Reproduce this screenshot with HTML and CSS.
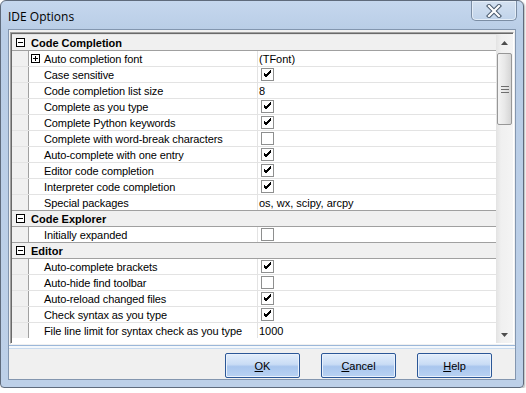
FILE: index.html
```html
<!DOCTYPE html>
<html lang="en">
  <head>
    <meta charset="UTF-8" />
    <title>IDE Options</title>
    <link rel="stylesheet" href="styles.css">
  </head>
  <body>
    <div class="window">
      <div class="titlebar">
        <span class="title">IDE Options</span>
        <button class="close-button">
          <svg width="16" height="14" viewBox="0 0 16 14">
            <path d="M3 2 L13 12 M13 2 L3 12" stroke="#4a5a6e" stroke-width="4.2" stroke-linecap="square" />
            <path d="M3 2 L13 12 M13 2 L3 12" stroke="#fff" stroke-width="2.2" stroke-linecap="square" />
          </svg>
        </button>
      </div>

      <div class="client">
        <div class="inspector">
          <div class="grid">
            <div class="category"><span class="toggle minus"></span>Code Completion</div>
            <div class="prop">
              <div class="gutter"></div>
              <div class="prop-name"><span class="toggle plus"></span>Auto completion font</div>
              <div class="prop-value">(TFont)</div>
            </div>
            <div class="prop">
              <div class="gutter"></div>
              <div class="prop-name">Case sensitive</div>
              <div class="prop-value"><span class="check on"></span></div>
            </div>
            <div class="prop">
              <div class="gutter"></div>
              <div class="prop-name">Code completion list size</div>
              <div class="prop-value">8</div>
            </div>
            <div class="prop">
              <div class="gutter"></div>
              <div class="prop-name">Complete as you type</div>
              <div class="prop-value"><span class="check on"></span></div>
            </div>
            <div class="prop">
              <div class="gutter"></div>
              <div class="prop-name">Complete Python keywords</div>
              <div class="prop-value"><span class="check on"></span></div>
            </div>
            <div class="prop">
              <div class="gutter"></div>
              <div class="prop-name">Complete with word-break characters</div>
              <div class="prop-value"><span class="check"></span></div>
            </div>
            <div class="prop">
              <div class="gutter"></div>
              <div class="prop-name">Auto-complete with one entry</div>
              <div class="prop-value"><span class="check on"></span></div>
            </div>
            <div class="prop">
              <div class="gutter"></div>
              <div class="prop-name">Editor code completion</div>
              <div class="prop-value"><span class="check on"></span></div>
            </div>
            <div class="prop">
              <div class="gutter"></div>
              <div class="prop-name">Interpreter code completion</div>
              <div class="prop-value"><span class="check on"></span></div>
            </div>
            <div class="prop">
              <div class="gutter"></div>
              <div class="prop-name">Special packages</div>
              <div class="prop-value">os, wx, scipy, arcpy</div>
            </div>

            <div class="category"><span class="toggle minus"></span>Code Explorer</div>
            <div class="prop">
              <div class="gutter"></div>
              <div class="prop-name">Initially expanded</div>
              <div class="prop-value"><span class="check"></span></div>
            </div>

            <div class="category"><span class="toggle minus"></span>Editor</div>
            <div class="prop">
              <div class="gutter"></div>
              <div class="prop-name">Auto-complete brackets</div>
              <div class="prop-value"><span class="check on"></span></div>
            </div>
            <div class="prop">
              <div class="gutter"></div>
              <div class="prop-name">Auto-hide find toolbar</div>
              <div class="prop-value"><span class="check"></span></div>
            </div>
            <div class="prop">
              <div class="gutter"></div>
              <div class="prop-name">Auto-reload changed files</div>
              <div class="prop-value"><span class="check on"></span></div>
            </div>
            <div class="prop">
              <div class="gutter"></div>
              <div class="prop-name">Check syntax as you type</div>
              <div class="prop-value"><span class="check on"></span></div>
            </div>
            <div class="prop last">
              <div class="gutter"></div>
              <div class="prop-name">File line limit for syntax check as you type</div>
              <div class="prop-value">1000</div>
            </div>
          </div>

          <div class="scrollbar">
            <div class="scroll-arrow">
              <svg width="7" height="4" viewBox="0 0 7 4"><path d="M3.5 0 L7 4 L0 4 Z" fill="#4d4d4d" /></svg>
            </div>
            <div class="scroll-track">
              <div class="scroll-thumb">
                <svg width="8" height="7" viewBox="0 0 8 7"><path d="M0 0.5 H8 M0 3.5 H8 M0 6.5 H8" stroke="#6e6e6e" /></svg>
              </div>
            </div>
            <div class="scroll-arrow">
              <svg width="7" height="4" viewBox="0 0 7 4"><path d="M0 0 L7 0 L3.5 4 Z" fill="#4d4d4d" /></svg>
            </div>
          </div>
        </div>

        <div class="splitter"></div>

        <div class="button-bar">
          <button class="button"><u>O</u>K</button>
          <button class="button"><u>C</u>ancel</button>
          <button class="button"><u>H</u>elp</button>
        </div>
      </div>
    </div>
  </body>
</html>
```

FILE: styles.css
```css
body {
  margin: 0;
  background: #fff;
  font-family: 'Liberation Sans', Arial, sans-serif;
  font-size: 11px;
  color: #000;
}

.window {
  box-sizing: border-box;
  width: 524px;
  height: 388px;
  display: flex;
  flex-direction: column;
  padding: 0 7px 7px;
  border: 1px solid #5f6b7c;
  border-radius: 6px 6px 4px 4px;
  background: linear-gradient(to bottom, #c5d7ee 0, #b9cde6 30px, #bdd0e8 100%);
  box-shadow: 1px 1px 2px #b4b4b4;
}

.titlebar {
  height: 28px;
  display: flex;
  align-items: flex-start;
}

.title {
  font-family: 'Open Sans', 'Liberation Sans', sans-serif;
  font-size: 12px;
  margin: 7px 0 0 0;
  color: #000;
}

.close-button {
  margin-left: auto;
  margin-right: -1px;
  width: 46px;
  height: 20px;
  padding: 0;
  border: 1px solid #7b8da4;
  border-top: none;
  border-radius: 0 0 5px 5px;
  background: linear-gradient(to bottom, #d4e1f1, #c0d3ea);
  box-shadow: inset 0 0 0 1px #e4edf7;
  display: flex;
  align-items: center;
  justify-content: center;
}

.client {
  flex: 1;
  display: flex;
  flex-direction: column;
  background: #f0f0f0;
  border: 1px solid #8396af;
}

.inspector {
  display: flex;
  height: 309px;
  margin: 2px 1px 0 1px;
  border: 1px solid #a0a0a0;
  border-right-color: #fff;
  border-bottom-color: #fff;
  box-shadow: inset 1px 1px 0 #696969;
  padding: 1px 0 0 1px;
}

.grid {
  width: 485px;
  display: flex;
  flex-direction: column;
  background: #fff;
  border-top: 1px solid #e3e3e3;
  overflow: hidden;
}

.category {
  flex: none;
  height: 15px;
  display: flex;
  align-items: center;
  background: #f0f0f0;
  border-bottom: 1px solid #a0a0a0;
  font-weight: bold;
}

.prop + .category {
  border-top: 1px solid #a0a0a0;
  margin-top: -1px;
}

.category .toggle {
  margin: 0 6px 0 4px;
}

.toggle {
  box-sizing: border-box;
  width: 9px;
  height: 9px;
  border: 1px solid #000;
  background: #fff;
  position: relative;
}

.toggle::before {
  content: '';
  position: absolute;
  left: 1px;
  top: 3px;
  width: 5px;
  height: 1px;
  background: #000;
}

.toggle.plus::after {
  content: '';
  position: absolute;
  left: 3px;
  top: 1px;
  width: 1px;
  height: 5px;
  background: #000;
}

.prop {
  flex: none;
  height: 15px;
  display: grid;
  grid-template-columns: 17px 229px 1fr;
  border-bottom: 1px solid #e3e3e3;
}

.prop.last {
  border-bottom: none;
}

.gutter {
  background: #f0f0f0;
  border-right: 1px solid #a0a0a0;
}

.prop-name {
  display: flex;
  align-items: center;
  padding-left: 15px;
  border-right: 1px solid #e3e3e3;
  white-space: nowrap;
  letter-spacing: -0.1px;
}

.prop-name .toggle {
  margin: 0 4px 0 -13px;
}

.prop-value {
  display: flex;
  align-items: center;
  padding-left: 1px;
  white-space: nowrap;
}

.check {
  box-sizing: border-box;
  width: 13px;
  height: 13px;
  margin-left: 2px;
  border: 1px solid #8e8f8f;
  background: #fff;
}

.check.on {
  background: #fff url("data:image/svg+xml,%3Csvg xmlns='http://www.w3.org/2000/svg' width='11' height='11'%3E%3Cpath d='M2 5 L4 7 L9 2 M2 6 L4 8 L9 3 M2 4 L4 6 L9 1' stroke='%23000' stroke-width='1' fill='none'/%3E%3C/svg%3E") no-repeat center;
}

.scrollbar {
  width: 17px;
  display: flex;
  flex-direction: column;
  background: linear-gradient(to right, #e3e3e3, #f0f0f0 30%, #f4f4f4);
}

.scroll-arrow {
  height: 17px;
  display: flex;
  align-items: center;
  justify-content: center;
}

.scroll-track {
  flex: 1;
  padding-top: 2px;
}

.scroll-thumb {
  box-sizing: border-box;
  height: 72px;
  margin: 0 1px 0 1px;
  border: 1px solid #979797;
  border-radius: 2px;
  background: linear-gradient(to right, #f4f4f4, #e8e8e8 50%, #d5d5d5);
  display: flex;
  align-items: center;
  justify-content: center;
}

.splitter {
  height: 2px;
  margin-top: 1px;
  border-top: 1px solid #9bb7d9;
  border-bottom: 1px solid #c9dbef;
  background: #f4f8fc;
}

.button-bar {
  flex: 1;
  display: flex;
  justify-content: flex-end;
  align-items: flex-start;
  gap: 21px;
  padding: 4px 23px 0 0;
}

.button {
  width: 75px;
  height: 25px;
  padding: 0;
  border: 1px solid #2b5797;
  border-radius: 2px;
  background: linear-gradient(to bottom, #e3eefb 0, #c9dcf5 45%, #a9c6ee 55%, #b8d2f3 100%);
  box-shadow: inset 0 0 0 1px #e9f1fc;
  font-family: 'Liberation Sans', Arial, sans-serif;
  font-size: 11px;
  color: #000;
}
```
